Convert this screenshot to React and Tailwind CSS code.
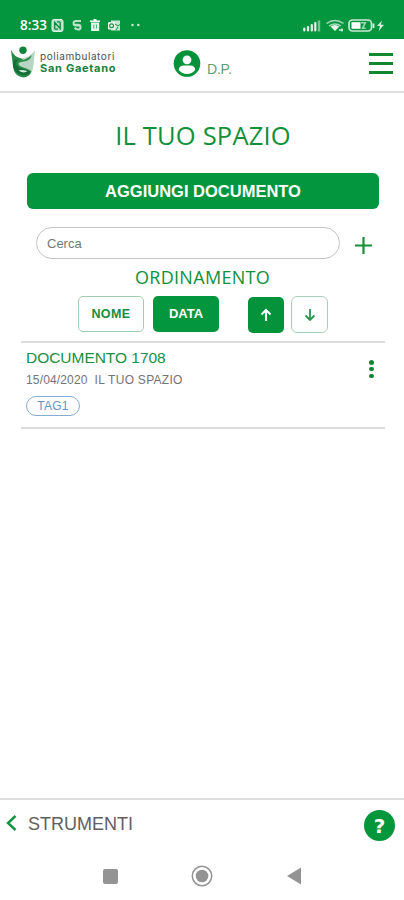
const SORT_FIELDS = [
  { label: "NOME", active: false },
  { label: "DATA", active: true },
]

const DOCUMENTS = [{ title: "DOCUMENTO 1708", date: "15/04/2020", folder: "IL TUO SPAZIO", tag: "TAG1" }]

function StatusBar() {
  return (
    <div className="flex h-[39px] shrink-0 items-end bg-[#04963e] pb-[5px] pl-5 pr-[19px] text-white">
      <span className="w-[30px] whitespace-nowrap pt-px font-['Open_Sans',sans-serif] text-[13.5px] font-semibold leading-[17px]">
        8:33
      </span>
      {/* Notification icons */}
      <svg className="h-[18px] w-[94px]" viewBox="0 0 94 18" fill="none">
        <rect x="2" y="3.5" width="11" height="12" rx="2" fill="#b5dfc4" stroke="#e0f3e7" />
        <path d="M4.7 13V6.5l5.5 6V6.2M7 5.8h3.2M4.7 13.2H8" stroke="#078c3c" strokeWidth="1.3" />
        <path d="M31 5h-5.2a2 2 0 0 0 0 4.500H30M23.500 8.800h4.700a2.200 2.200 0 0 1 0 4.700q-2 0-3.700-1.800" stroke="#b9e2c8" strokeWidth="2" />
        <path d="M40 5.2h10M43.5 3.8h3" stroke="#fff" strokeWidth="1.6" />
        <path d="M41 6.5h8.2V15H41z" fill="#e7f6ec" />
        <path d="M43.8 8.5v4M46.5 8.5v4" stroke="#4fb477" strokeWidth="1" />
        <path d="M61 4.5h9v10h-9z" fill="#c4e7d0" />
        <rect x="58" y="6" width="7.2" height="7.5" rx="1" fill="#e8f6ed" />
        <circle cx="61.6" cy="9.8" r="1.9" stroke="#139447" strokeWidth="1.2" />
        <path d="m65 8 3 2 2.5-2M66 14l2-3" stroke="#139447" />
        <circle cx="82.5" cy="9" r="1.3" fill="#c1e5ce" />
        <circle cx="88.3" cy="9" r="1.3" fill="#c1e5ce" />
      </svg>
      {/* Signal, wifi and battery */}
      <svg className="ml-auto h-[18px] w-[83px]" viewBox="0 0 83 18" fill="none">
        <path d="M2.3 14.5v-2M6 14.5v-3.5M9.8 14.5V9M13.3 14.5V7" stroke="#e6f5eb" strokeWidth="2.2" strokeLinecap="round" />
        <path d="M17 15.5V4.5" stroke="#79c596" strokeWidth="2.4" />
        <path d="M24.5 7.5q8.5-5.8 17 0M27 10q6-4.2 12 0" stroke="#a5d9b8" strokeWidth="1.5" />
        <path d="m28.5 10.5 4.5 4.5 4.3-4.5q-4.3-3.2-8.800 0z" fill="#e9f6ed" />
        <path d="M37 14h4M40 12.5v3" stroke="#d4edde" strokeWidth="1.3" />
        <rect x="47" y="4" width="22.5" height="11" rx="3.5" stroke="#c9e9d5" strokeWidth="1.7" />
        <path d="M49.5 6.2h9v6.6h-9z" fill="#fff" />
        <path d="M59 6.8h4.3L60.5 12.3h3.2" stroke="#9dd5b2" strokeWidth="1.6" />
        <path d="M71.5 7.5v4.5" stroke="#d9f0e1" strokeWidth="1.9" />
        <path d="m80 4.5-5 5.5h3l-1.3 5 5.3-6.3h-3.2z" fill="#d9f0e1" />
      </svg>
    </div>
  )
}

function Logo() {
  return (
    <div className="flex w-[112px] items-start">
      <svg className="h-8 w-[27px] shrink-0" viewBox="0 0 27 32">
        <path d="M1 4q3 8 9 8 4.5 0 6-.5Q22 9 25 4l-1.5 15Q23 30 13 31 4 30 3 20z" fill="#b7d5c2" />
        <path d="M1 3.8q3.5 7.5 9.5 8.4l3 1.8q4.5-1.500 8.5-5-2 6-8.5 6.5-6.5.5-4.5 3.5 1 1.5 6 3 5.5 2 6.5 3.5-2 5.5-8.5 6.1Q4 30.5 3 20z" fill="#288b49" />
        <path d="M8.5 13.5q-4 3.5-1 6.8 2 2.2 7 3.3l5.5 2q-1 3-5 4.2-7-1-10.5-6-3-5 0-10z" fill="#126e34" />
        <path d="M8.5 24.5q3-1.5 9 .8-4 2.5-9-.8z" fill="#d8eadf" />
        <circle cx="13" cy="4.3" r="3.7" fill="#13843c" />
      </svg>
      <div className="ml-[3px] mt-[4px] whitespace-nowrap font-['Inter',sans-serif]">
        <div className="text-[10px] leading-[13px] tracking-[0.57px] text-[#4a504c]">poliambulatori</div>
        <div className="text-[11px] font-bold leading-[11px] tracking-[0.72px] text-[#17813d]">San Gaetano</div>
      </div>
    </div>
  )
}

function Header() {
  return (
    <header className="flex h-[54px] shrink-0 items-start border-b-2 border-[#dedede] pl-[10px] pr-[11px] pt-[7px]">
      <Logo />
      <svg className="ml-[51px] mt-[4px] h-7 w-7" viewBox="0 0 28 28">
        <circle cx="14" cy="13.5" r="13.3" fill="#04923a" />
        <circle cx="14" cy="9.8" r="4.4" fill="#fff" />
        <path d="M5.8 20q0-4.5 5.2-4.5h6q5.2 0 5.2 4.5-3.2 4-8.2 4t-8.2-4z" fill="#fff" />
      </svg>
      <span className="ml-[6px] mt-[15px] text-[14px] leading-4 tracking-[-0.2px] text-[#5d9f77]">D.P.</span>
      <button className="ml-auto mt-[7px] flex h-[21px] w-6 flex-col justify-between" aria-label="Menu">
        <span className="h-[3px] w-full bg-[#12882f]" />
        <span className="h-[3px] w-full bg-[#12882f]" />
        <span className="h-[3px] w-full bg-[#12882f]" />
      </button>
    </header>
  )
}

function SortArrow({ down, className }) {
  return (
    <svg className={className} viewBox="0 0 12 14" fill="none" stroke="currentColor">
      <path d={down ? "M6 1v11M1.5 7.5 6 12l4.5-4.5" : "M6 13V2M1.5 6.5 6 2l4.5 4.5"} />
    </svg>
  )
}

function SortBar() {
  return (
    <div className="mt-[7px] flex h-[37px] items-start pl-[78px]">
      {SORT_FIELDS.map(({ label, active }) => (
        <button
          key={label}
          className={
            active
              ? "ml-[9px] h-9 w-[66px] rounded-[5px] bg-[#04963e] pb-px text-[13px] font-bold text-white"
              : "h-9 w-[66px] rounded-[5px] border border-[#a0cdb0] text-[12.5px] font-bold tracking-[0.4px] text-[#178d40]"
          }
        >
          {label}
        </button>
      ))}
      <button className="ml-[29px] mt-px flex h-9 w-9 items-center justify-center rounded-[5px] bg-[#04923a] text-white" aria-label="Crescente">
        <SortArrow className="h-[14px] w-3 stroke-[2.1]" />
      </button>
      <button
        className="ml-[7px] flex h-[37px] w-[37px] items-center justify-center rounded-[6px] border border-[#a9d2b9] text-[#2b9350]"
        aria-label="Decrescente"
      >
        <SortArrow down className="h-[14px] w-3 stroke-[1.8]" />
      </button>
    </div>
  )
}

function DocumentRow({ doc }) {
  return (
    <div className="ml-[21px] mr-[19px] flex h-[88px] justify-between border-y-2 border-[#dcdcdc] pl-[5px] pr-[10px]">
      <div className="whitespace-nowrap pt-[6px]">
        <div className="text-[15.5px] leading-[18px] tracking-[-0.03px] text-[#17913f]">{doc.title}</div>
        <div className="mt-[6px] flex gap-[7px] text-[12px] leading-[14px] text-[#747474]">
          <span className="tracking-[0.15px]">{doc.date}</span>
          <span className="tracking-[0.28px]">{doc.folder}</span>
        </div>
        <span className="mt-[9px] flex h-5 w-[54px] items-center justify-center rounded-full border border-[#87abd2] text-[12px] tracking-[0.2px] text-[#6492c4]">
          {doc.tag}
        </span>
      </div>
      <button className="mt-[17px] flex h-[18px] w-[7px] flex-col items-center justify-between" aria-label="Opzioni">
        <span className="h-[4.5px] w-[4.5px] rounded-full bg-[#148332]" />
        <span className="h-[4.5px] w-[4.5px] rounded-full bg-[#148332]" />
        <span className="h-[4.5px] w-[4.5px] rounded-full bg-[#148332]" />
      </button>
    </div>
  )
}

function Footer() {
  return (
    <footer className="shrink-0">
      <div className="flex h-[54px] items-center border-t-2 border-[#dedede] pl-[6px] pr-[9px]">
        <svg className="mb-[6px] h-[18px] w-[11px]" viewBox="0 0 11 18" fill="none">
          <path d="M9.5 2 2 9l7.5 7" stroke="#11933f" strokeWidth="2.4" />
        </svg>
        <span className="mb-[4px] ml-[11px] text-[18px] text-[#606060]">STRUMENTI</span>
        <button
          className="mb-px ml-auto flex h-[31px] w-[31px] items-center justify-center rounded-full bg-[#04963a] font-['DejaVu_Sans',sans-serif] text-[20px] font-bold leading-none text-white"
          aria-label="Aiuto"
        >
          ?
        </button>
      </div>
      {/* Android navigation */}
      <div className="flex h-12 items-center pl-[103px] text-[#949494]">
        <span className="h-[15px] w-[15px] rounded-[2px] bg-[#949494]" />
        <svg className="ml-[73px] h-[22px] w-[22px]" viewBox="0 0 22 22">
          <circle cx="11" cy="11" r="9.7" fill="none" stroke="currentColor" strokeWidth="1.5" />
          <circle cx="11" cy="11" r="6.3" fill="currentColor" />
        </svg>
        <svg className="ml-[74px] h-[18px] w-[14px]" viewBox="0 0 14 18">
          <path d="M14 .5v17L0 9z" fill="currentColor" />
        </svg>
      </div>
    </footer>
  )
}

export default function App() {
  return (
    <div className="flex h-[900px] w-[404px] flex-col overflow-hidden bg-white font-['Liberation_Sans',sans-serif]">
      <StatusBar />
      <Header />
      <main className="flex-1">
        <h1 className="mt-[26px] pl-[2px] text-center font-['Open_Sans',sans-serif] text-[25.5px] leading-8 tracking-[0.2px] text-[#11903a]">
          IL TUO SPAZIO
        </h1>
        <button className="ml-[27px] mt-[22px] block h-9 w-[352px] rounded-[6px] bg-[#04963e] text-[16.5px] font-bold text-white">
          AGGIUNGI DOCUMENTO
        </button>
        <div className="mt-[18px] flex items-center pl-9">
          <input
            className="h-8 w-[304px] rounded-full border border-[#c4c4c4] px-[10px] text-[13px] placeholder:text-[#757575] placeholder:opacity-100"
            placeholder="Cerca"
          />
          <svg className="ml-[15px] mt-[4px] h-[17px] w-[17px]" viewBox="0 0 17 17">
            <path d="M8.5 0v17M0 8.5h17" stroke="#168f35" strokeWidth="2.2" />
          </svg>
        </div>
        <h2 className="mt-[6px] pl-px text-center font-['Open_Sans',sans-serif] text-[18px] leading-6 tracking-[0.3px] text-[#11903a]">
          ORDINAMENTO
        </h2>
        <SortBar />
        <div className="mt-[8px]">
          {DOCUMENTS.map((doc) => (
            <DocumentRow key={doc.title} doc={doc} />
          ))}
        </div>
      </main>
      <Footer />
    </div>
  )
}
